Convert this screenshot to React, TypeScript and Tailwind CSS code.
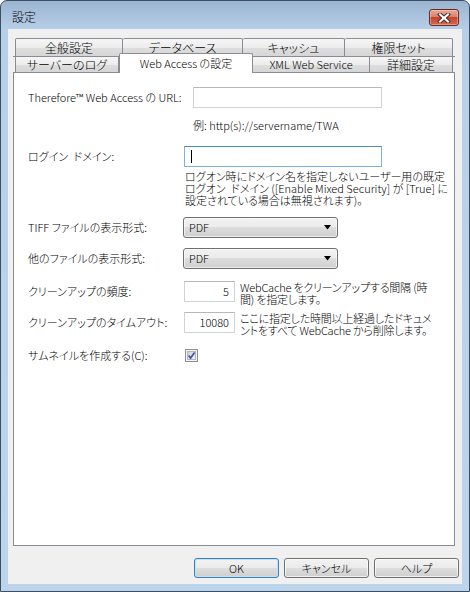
import React from "react";

// Aero-style "設定" dialog with the Web Access tab open.

const topTabs = [
  { label: "全般設定", w: "w-[108px]" },
  { label: "データベース", w: "w-[120px]" },
  { label: "キャッシュ", w: "w-[102px]" },
  { label: "権限セット", w: "w-[108px]" },
];

const bottomTabs = [
  { label: "サーバーのログ", w: "w-[104px]", size: "text-[12px]", selected: false },
  { label: "Web Access の設定", w: "w-[134px]", size: "text-[11px]", selected: true },
  { label: "XML Web Service", w: "w-[117px]", size: "text-[11px]", selected: false },
  { label: "詳細設定", w: "w-[83px]", size: "text-[12px]", selected: false },
];

const tabFace =
  "bg-[linear-gradient(to_bottom,#f6f6f6_0%,#ececec_50%,#dedede_51%,#d6d6d6_100%)]";

const buttonFace =
  "bg-[linear-gradient(to_bottom,#f2f2f2_0%,#ebebeb_49%,#dddddd_50%,#cfcfcf_100%)]";

const CloseButton = () => (
  <div className="w-[30px] h-[17px] rounded-[3px] border border-[#6b2b22] bg-[linear-gradient(to_bottom,#e9a99b_0%,#d7826f_45%,#c4462c_50%,#d06a50_100%)] shadow-[inset_0_0_0_1px_rgba(255,210,200,0.45)] flex items-center justify-center">
    <svg width="14" height="10" viewBox="0 0 14 10">
      <path d="M3 1.5 L11 8.5 M11 1.5 L3 8.5" stroke="#4a2420" strokeWidth="4" strokeLinecap="square" />
      <path d="M3 1.5 L11 8.5 M11 1.5 L3 8.5" stroke="#ffffff" strokeWidth="2.2" strokeLinecap="square" />
    </svg>
  </div>
);

const TextBox = ({ className, children }: { className: string; children?: React.ReactNode }) => (
  <div className={`h-[21px] bg-white border border-[#cfd4db] border-t-[#b3b7be] flex items-center ${className}`}>
    {children}
  </div>
);

const Combo = ({ value }: { value: string }) => (
  <div className={`w-[155px] h-[21px] rounded-[3px] border border-[#707070] ${buttonFace} shadow-[inset_0_0_0_1px_rgba(255,255,255,0.6)] flex items-center justify-between pl-[5px] pr-[5px]`}>
    <span className="leading-none">{value}</span>
    <svg width="8" height="5" viewBox="0 0 8 5">
      <path d="M0 0 H7 L3.5 4.5 Z" fill="#000" />
    </svg>
  </div>
);

const CheckBox = () => (
  <svg width="13" height="13" viewBox="0 0 13 13">
    <defs>
      <linearGradient id="cbFill" x1="0" y1="0" x2="1" y2="1">
        <stop offset="0" stopColor="#cbcfd5" />
        <stop offset="1" stopColor="#f6f6f6" />
      </linearGradient>
    </defs>
    <rect x="0.5" y="0.5" width="12" height="12" fill="#f4f4f4" stroke="#8e8f8f" />
    <rect x="2.5" y="2.5" width="8" height="8" fill="url(#cbFill)" stroke="#b4b8be" />
    <path d="M3.6 6.4 L5.6 9 L9.6 3.4" stroke="#3c5aa8" strokeWidth="1.7" fill="none" />
  </svg>
);

const DialogButton = ({ label, primary }: { label: string; primary?: boolean }) => (
  <div
    className={`w-[85px] h-[20px] rounded-[3px] border ${buttonFace} flex items-center justify-center leading-none ${
      primary
        ? "border-[#3c7fb1] shadow-[inset_0_0_0_1px_#bfe4f8]"
        : "border-[#707070] shadow-[inset_0_0_0_1px_rgba(255,255,255,0.7)]"
    }`}
  >
    {label}
  </div>
);

export default function App() {
  return (
    <div className="w-[470px] h-[592px] rounded-t-[7px] border border-[#3d4e62] bg-[linear-gradient(to_bottom,#9ab4d1_0px,#b8cfe8_29px,#bcd4ec_100%)] flex flex-col text-[11px] font-light whitespace-nowrap text-black font-['Noto_Sans_CJK_JP',sans-serif] [font-feature-settings:'palt'] select-none">
      {/* title bar */}
      <div className="h-[28px] flex items-start justify-between pl-[11px] pr-[10px] pt-[8px]">
        <span className="leading-[16px] text-[12px]">設定</span>
        <CloseButton />
      </div>

      {/* client area */}
      <div className="mx-[7px] h-[555px] bg-[#f0f0f0] flex flex-col pt-[9px]">
        <div className="ml-[5px] w-[442px] flex flex-col">
          <div className="px-[2px] h-[18px] flex">
            {topTabs.map((t, i) => (
              <div
                key={t.label}
                className={`${t.w} h-[18px] ${tabFace} border-t border-r border-[#898c95] ${
                  i === 0 ? "border-l" : ""
                } rounded-t-[2px] flex items-center justify-center leading-none text-[12px]`}
              >
                {t.label}
              </div>
            ))}
          </div>
          <div className="px-[2px] h-[16px] flex items-start border-t border-[#898c95]">
            {bottomTabs.map((t, i) =>
              t.selected ? (
                <div
                  key={t.label}
                  className={`${t.w} ${t.size} h-[20px] -mt-[4px] relative z-10 bg-white border-t border-x border-[#898c95] rounded-t-[2px] flex items-center justify-center leading-none pb-[1px]`}
                >
                  {t.label}
                </div>
              ) : (
                <div
                  key={t.label}
                  className={`${t.w} ${t.size} h-[15px] ${tabFace} border-r border-[#898c95] ${
                    i === 0 ? "border-l" : ""
                  } flex items-center justify-center leading-none`}
                >
                  {t.label}
                </div>
              )
            )}
          </div>

          {/* tab page */}
          <div className="h-[474px] bg-white border border-[#898c95] pl-[14px] pt-[14px] flex flex-col">
            <div className="h-[21px] flex items-center">
              <span className="w-[165px] leading-none">Therefore™ Web Access の URL:</span>
              <TextBox className="w-[189px]" />
            </div>
            <div className="mt-[11px] h-[12px] pl-[165px] leading-[12px]">例: http(s)://servername/TWA</div>

            <div className="mt-[15px] h-[21px] flex items-center">
              <span className="w-[156px] leading-none">ログイン{"\u2002"}ドメイン:</span>
              <div className="w-[198px] h-[21px] bg-white border border-[#7db2e4] border-t-[#4d8bc4] flex items-center">
                <span className="ml-[6px] w-px h-[13px] bg-black" />
              </div>
            </div>
            <div className="mt-[3px] pl-[157px] leading-[12px]">
              <div>ログオン時にドメイン名を指定しないユーザー用の既定</div>
              <div>ログオン{"\u2002"}ドメイン ([Enable Mixed Security] が [True] に</div>
              <div>設定されている場合は無視されます)。</div>
            </div>

            <div className="mt-[11px] h-[21px] flex items-center">
              <span className="w-[155px] leading-none">TIFF ファイルの表示形式:</span>
              <Combo value="PDF" />
            </div>
            <div className="mt-[10px] h-[21px] flex items-center">
              <span className="w-[155px] leading-none">他のファイルの表示形式:</span>
              <Combo value="PDF" />
            </div>

            <div className="mt-[12px] flex items-start">
              <div className="h-[21px] flex items-center">
                <span className="w-[156px] leading-none">クリーンアップの頻度:</span>
                <TextBox className="w-[51px] justify-end pr-[5px]">
                  <span className="leading-none">5</span>
                </TextBox>
              </div>
              <div className="ml-[5px] leading-[12px] tracking-[-0.2px]">
                <div>WebCache をクリーンアップする間隔 (時</div>
                <div>間) を指定します。</div>
              </div>
            </div>

            <div className="mt-[7px] flex items-start">
              <div className="h-[21px] flex items-center">
                <span className="w-[156px] leading-none">クリーンアップのタイムアウト:</span>
                <TextBox className="w-[51px] justify-end pr-[5px]">
                  <span className="leading-none">10080</span>
                </TextBox>
              </div>
              <div className="ml-[5px] leading-[12px] tracking-[-0.2px]">
                <div>ここに指定した時間以上経過したドキュメ</div>
                <div>ントをすべて WebCache から削除します。</div>
              </div>
            </div>

            <div className="mt-[13px] h-[13px] flex items-center">
              <span className="w-[157px] leading-none">サムネイルを作成する(C):</span>
              <CheckBox />
            </div>
          </div>
        </div>

        {/* dialog buttons */}
        <div className="mt-[12px] pr-[3px] flex justify-end gap-[5px]">
          <DialogButton label="OK" primary />
          <DialogButton label="キャンセル" />
          <DialogButton label="ヘルプ" />
        </div>
      </div>
    </div>
  );
}
